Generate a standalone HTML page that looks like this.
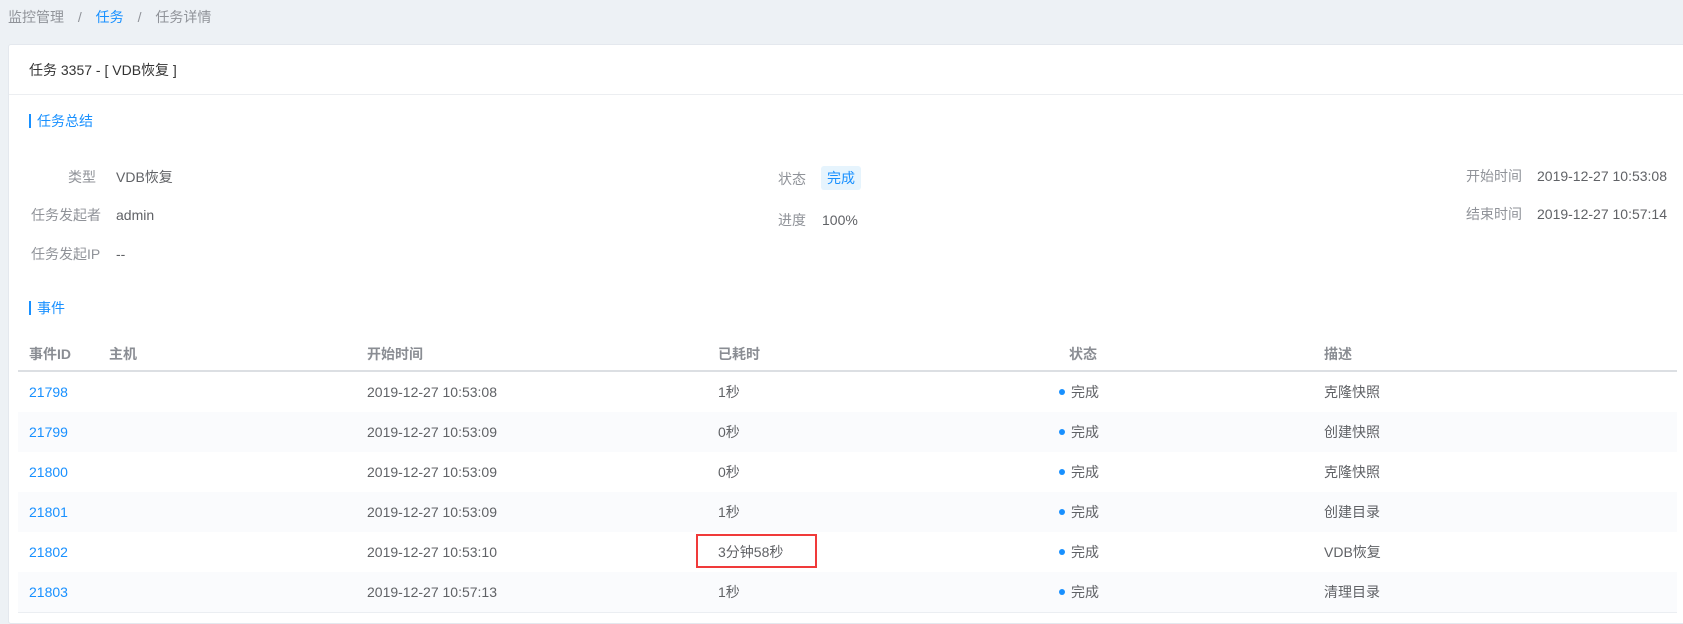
<!DOCTYPE html>
<html><head><meta charset="utf-8"><style>
*{margin:0;padding:0;box-sizing:border-box}
body{width:1683px;height:615px;background:#edf1f5;font-family:"Liberation Sans","Noto Sans CJK SC",sans-serif;font-size:14px;color:#606266;position:relative;overflow:hidden}
.a{position:absolute;white-space:nowrap;line-height:20px}
.card{position:absolute;left:8px;top:44px;width:1680px;height:580px;background:#fff;border:1px solid #e4e8ee;border-radius:3px}
.lbl{color:#909399}
.bar{position:absolute;width:2px;height:14px;background:#1890ff}
.blue{color:#1890ff}
.row{position:absolute;left:18px;width:1659px;height:40px}
.st{background:#fafbfd}
.dot{position:absolute;width:6px;height:6px;border-radius:50%;background:#1890ff}
.h{font-weight:bold;color:#8a8d93}
</style></head><body>
<div class="a" style="left:8px;top:7px;color:#909399">监控管理 <span style="margin:0 10px">/</span> <span class="blue">任务</span> <span style="margin:0 10px">/</span> 任务详情</div>
<div class="card"></div>
<div class="a" style="left:29px;top:60px;color:#333">任务 3357 - [ VDB恢复 ]</div>
<div style="position:absolute;left:9px;top:94px;width:1674px;height:1px;background:#eceef1"></div>
<div class="bar" style="left:29px;top:114px"></div><div class="a blue" style="left:37px;top:111px">任务总结</div>

<div class="a lbl" style="left:68px;top:167px">类型</div><div class="a" style="left:116px;top:167px">VDB恢复</div>
<div class="a lbl" style="left:31px;top:205px">任务发起者</div><div class="a" style="left:116px;top:205px">admin</div>
<div class="a lbl" style="left:31px;top:244px">任务发起IP</div><div class="a" style="left:116px;top:244px">--</div>

<div class="a lbl" style="left:778px;top:169px">状态</div>
<div style="position:absolute;left:821px;top:166px;width:40px;height:24px;background:#e6f4fd;border-radius:3px"></div>
<div class="a blue" style="left:827px;top:168px">完成</div>
<div class="a lbl" style="left:778px;top:210px">进度</div><div class="a" style="left:822px;top:210px">100%</div>

<div class="a lbl" style="left:1466px;top:166px">开始时间</div><div class="a" style="left:1537px;top:166px">2019-12-27 10:53:08</div>
<div class="a lbl" style="left:1466px;top:204px">结束时间</div><div class="a" style="left:1537px;top:204px">2019-12-27 10:57:14</div>

<div class="bar" style="left:29px;top:301px"></div><div class="a blue" style="left:37px;top:298px">事件</div>

<div class="a h" style="left:29px;top:344px">事件ID</div>
<div class="a h" style="left:109px;top:344px">主机</div>
<div class="a h" style="left:367px;top:344px">开始时间</div>
<div class="a h" style="left:718px;top:344px">已耗时</div>
<div class="a h" style="left:1069px;top:344px">状态</div>
<div class="a h" style="left:1324px;top:344px">描述</div>
<div style="position:absolute;left:18px;top:370px;width:1659px;height:2px;background:#dcdfe3"></div>

<div class="row" style="top:372px"></div>
<div class="row st" style="top:412px"></div>
<div class="row" style="top:452px"></div>
<div class="row st" style="top:492px"></div>
<div class="row" style="top:532px"></div>
<div class="row st" style="top:572px"></div>
<div style="position:absolute;left:18px;top:612px;width:1659px;height:1px;background:#ebeef2"></div>

<div class="a blue" style="left:29px;top:382px">21798</div><div class="a" style="left:367px;top:382px">2019-12-27 10:53:08</div><div class="a" style="left:718px;top:382px">1秒</div><div class="dot" style="left:1059px;top:389px"></div><div class="a" style="left:1071px;top:382px">完成</div><div class="a" style="left:1324px;top:382px">克隆快照</div>
<div class="a blue" style="left:29px;top:422px">21799</div><div class="a" style="left:367px;top:422px">2019-12-27 10:53:09</div><div class="a" style="left:718px;top:422px">0秒</div><div class="dot" style="left:1059px;top:429px"></div><div class="a" style="left:1071px;top:422px">完成</div><div class="a" style="left:1324px;top:422px">创建快照</div>
<div class="a blue" style="left:29px;top:462px">21800</div><div class="a" style="left:367px;top:462px">2019-12-27 10:53:09</div><div class="a" style="left:718px;top:462px">0秒</div><div class="dot" style="left:1059px;top:469px"></div><div class="a" style="left:1071px;top:462px">完成</div><div class="a" style="left:1324px;top:462px">克隆快照</div>
<div class="a blue" style="left:29px;top:502px">21801</div><div class="a" style="left:367px;top:502px">2019-12-27 10:53:09</div><div class="a" style="left:718px;top:502px">1秒</div><div class="dot" style="left:1059px;top:509px"></div><div class="a" style="left:1071px;top:502px">完成</div><div class="a" style="left:1324px;top:502px">创建目录</div>
<div class="a blue" style="left:29px;top:542px">21802</div><div class="a" style="left:367px;top:542px">2019-12-27 10:53:10</div><div class="a" style="left:718px;top:542px">3分钟58秒</div><div class="dot" style="left:1059px;top:549px"></div><div class="a" style="left:1071px;top:542px">完成</div><div class="a" style="left:1324px;top:542px">VDB恢复</div>
<div style="position:absolute;left:696px;top:534px;width:121px;height:34px;border:2px solid #f03a3a"></div>
<div class="a blue" style="left:29px;top:582px">21803</div><div class="a" style="left:367px;top:582px">2019-12-27 10:57:13</div><div class="a" style="left:718px;top:582px">1秒</div><div class="dot" style="left:1059px;top:589px"></div><div class="a" style="left:1071px;top:582px">完成</div><div class="a" style="left:1324px;top:582px">清理目录</div>
</body></html>
